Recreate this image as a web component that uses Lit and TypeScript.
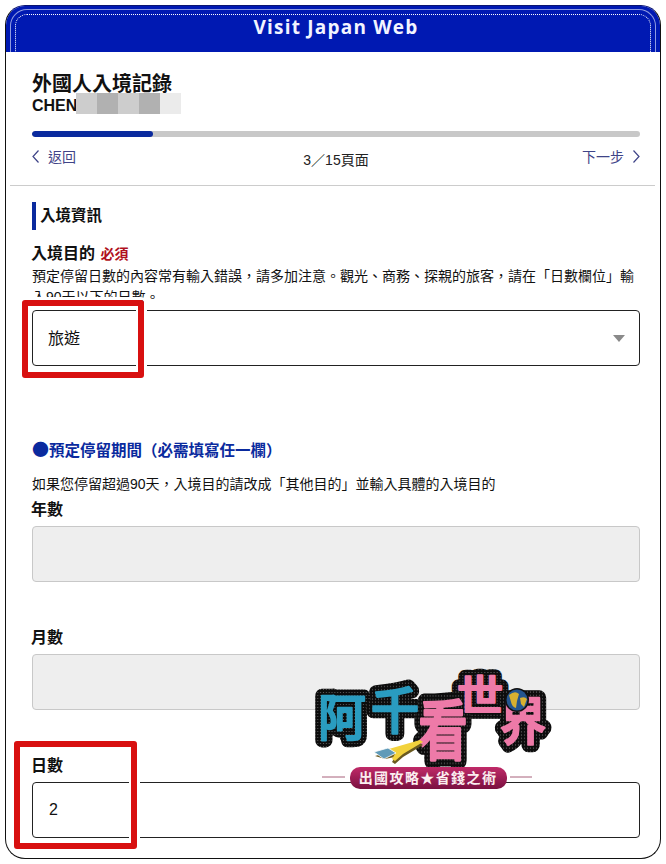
import { LitElement, html, css, svg } from "lit";
import { customElement } from "lit/decorators.js";

const GLYPHS = [
  { t: "阿", x: 30, y: 72, s: 50, c: "#2a9cc0", sx: 0.95, sy: 1 },
  { t: "千", x: 83, y: 65, s: 48, c: "#2a9cc0", sx: 1, sy: 1.05 },
  { t: "世", x: 168, y: 47, s: 44, c: "#ee7aa8", sx: 1.05, sy: 0.95 },
  { t: "界", x: 211, y: 76, s: 46, c: "#ee7aa8", sx: 1, sy: 1.1 },
  { t: "看", x: 131, y: 90, s: 52, c: "#ee7aa8", sx: 0.95, sy: 1.25 },
];

@customElement("app-root")
export class AppRoot extends LitElement {
  static styles = css`
    :host {
      display: block;
      position: relative;
      width: 666px;
      height: 864px;
      overflow: hidden;
      background: #fff;
      color: #111;
      font-family: "Liberation Sans", "Noto Sans CJK TC", sans-serif;
      font-size: 14px;
    }
    .page { padding: 5px 5px 0 5px; }
    .frame {
      box-sizing: border-box;
      width: 656px;
      height: 854px;
      border: 1px solid #111;
      border-top-color: #0a1470;
      border-radius: 20px;
      overflow: hidden;
      background: #fff;
    }
    .header {
      position: relative;
      height: 46px;
      background: #0019b2;
      display: flex;
      align-items: center;
      justify-content: center;
      overflow: hidden;
    }
    .brand {
      font-family: "Open Sans", sans-serif;
      font-weight: 700;
      font-size: 19px;
      letter-spacing: 1.2px;
      color: #f2f4ff;
      margin: -5px 0 0 6px;
    }
    .line, .dots {
      position: absolute;
      border-bottom: none !important;
      box-sizing: border-box;
    }
    .line {
      inset: 3px 4px -30px 4px;
      border: 1px solid #8f9be0;
      border-radius: 17px 17px 0 0;
    }
    .dots {
      inset: 8px 9px -30px 9px;
      border: 1px dotted #fff;
      border-radius: 12px 12px 0 0;
    }
    .top { padding: 22px 20px 0 26px; }
    .title { font-size: 20px; font-weight: 700; line-height: 20px; margin-bottom: -1px; }
    .name {
      display: flex;
      font-size: 16px;
      font-weight: 700;
      line-height: 21px;
      height: 21px;
    }
    .chen { margin-top: 2px; }
    .blur { width: 21px; height: 21px; }
    .first-blur { margin-left: -1px; }
    .b1 { background: #cdcdcd; }
    .b2 { background: #b1b1b1; }
    .b3 { background: #ebebeb; }
    .track {
      margin-top: 17px;
      height: 6px;
      border-radius: 3px;
      background: #c8c8c8;
      overflow: hidden;
    }
    .fill { width: 19.9%; height: 100%; border-radius: 3px; background: #0a2a9e; }
    .nav {
      display: flex;
      justify-content: space-between;
      align-items: flex-start;
      padding-top: 10px;
      height: 38px;
      box-sizing: content-box;
      line-height: 20px;
    }
    .link { display: flex; align-items: center; gap: 9px; color: #3f4488; }
    .link svg { display: block; margin-top: -2px; }
    .count { margin-top: 3px; color: #222; padding-left: 14px; }
    .rule { height: 1px; margin: 0 5px 0 4px; background: #ccc; }
    .body { padding: 16px 20px 0 26px; }
    .section {
      border-left: 4px solid #0a2a9e;
      padding-left: 4px;
      font-weight: 700;
      line-height: 28px;
      height: 28px;
      font-size: 15.5px;
    }
    .label { font-size: 16px; font-weight: 700; line-height: 22px; margin-left: -1px; }
    .first { margin-top: 13px; margin-bottom: -1px; }
    .req { font-size: 14px; color: #b01020; margin-left: 1px; }
    .desc { line-height: 21px; margin-top: 2px; height: 44px; }
    .field {
      box-sizing: border-box;
      height: 56px;
      border: 1px solid #222;
      border-radius: 4px;
      background: #fff;
      display: flex;
      align-items: center;
      justify-content: space-between;
      padding: 0 14px 0 16px;
      font-size: 16px;
    }
    .sel-text { margin: -2px 0 0 -1px; }
    .arrow {
      width: 0;
      height: 0;
      border-left: 6px solid transparent;
      border-right: 6px solid transparent;
      border-top: 7px solid #8a8a8a;
    }
    .off { background: #eeeeee; border-color: #c8c8c8; }
    .h2 {
      margin-top: 73px;
      font-size: 15.5px;
      font-weight: 700;
      line-height: 24px;
      height: 24px;
      color: #0a2a9e;
      white-space: nowrap;
    }
    .bullet { font-family: "Noto Sans CJK TC", sans-serif; font-size: 17px; line-height: 20px; }
    .note { margin-top: 11px; line-height: 20px; }
    .gap4 { margin-top: 5px; }
    .gap44 { margin-top: 45px; }
    .lab2 { margin-bottom: 5px; }
    .mark {
      position: absolute;
      box-sizing: border-box;
      border: 6px solid #d81010;
      border-radius: 3px;
      box-shadow: 0 0 0 3px #fff, inset 0 0 0 2px #fff;
    }
    .m1 { left: 22px; top: 300px; width: 122px; height: 78px; }
    .m2 { left: 14px; top: 741px; width: 123px; height: 108px; }
    .logo { position: absolute; left: 312px; top: 664px; width: 240px; height: 130px; overflow: visible; }
    .g {
      font-family: "Noto Sans CJK TC", sans-serif;
      font-weight: 500;
      text-anchor: middle;
    }
    .g-out { stroke: url(#dotty); stroke-width: 14px; stroke-linejoin: round; fill: #111; }
    .g-in { stroke-width: 2.2px; stroke-linejoin: round; }
    .pill-text {
      font-family: "Noto Sans CJK TC", sans-serif;
      font-weight: 700;
      font-size: 14px;
      letter-spacing: 1.4px;
      fill: #fbeef0;
      text-anchor: middle;
    }
  `;

  private logo() {
    const tf = (g: (typeof GLYPHS)[number]) => `translate(${g.x} ${g.y}) scale(${g.sx} ${g.sy})`;
    return html`<svg class="logo" viewBox="0 0 240 130" aria-label="logo">
      <defs>
        <pattern id="dotty" width="3" height="3" patternUnits="userSpaceOnUse">
          <rect width="3" height="3" fill="#0c0c0c"></rect>
          <circle cx="1.5" cy="1.5" r=".6" fill="#6a6a6a"></circle>
        </pattern>
        <linearGradient id="pill" x1="0" y1="0" x2="0" y2="1">
          <stop offset="0" stop-color="#c02a68"></stop>
          <stop offset="1" stop-color="#7a1040"></stop>
        </linearGradient>
      </defs>
      ${GLYPHS.map(
        (g) => svg`<text class="g g-out" transform=${tf(g)} font-size=${g.s}>${g.t}</text>`
      )}
      ${GLYPHS.map(
        (g) =>
          svg`<text class="g g-in" transform=${tf(g)} font-size=${g.s} fill=${g.c} stroke=${g.c}>${g.t}</text>`
      )}
      <circle cx="205" cy="36" r="12" fill="#111"></circle>
      <circle cx="205" cy="36" r="10.5" fill="#24558f"></circle>
      <path d="M197 31q6-5 10-1l-2 7 -1 7q-4-1-5-6zM208 34q5-2 7 1l-3 8-3-3z" fill="#d8b030"></path>
      <path d="M63 92l45-13 3 2-20 12-8 7-3-2 3-5-10 2z" fill="#6a5a20"></path>
      <path d="M63 89l45-13 3 2-20 12-8 7-3-2 3-5-10 2z" fill="#f2d23c"></path>
      <path d="M62 88l14-4 8 5-12 6z" fill="#5f9ab8" stroke="#fff" stroke-width=".8"></path>
      <path d="M10 113h23M198 113h22" stroke="#a8607a" stroke-width="1"></path>
      <rect x="38" y="103" width="157" height="22" rx="10" fill="url(#pill)"></rect>
      <text class="pill-text" x="116" y="119">出國攻略★省錢之術</text>
    </svg>`;
  }

  render() {
    return html`
      <div class="page">
        <div class="frame">
          <div class="header">
            <span class="line"></span>
            <span class="dots"></span>
            <span class="brand">Visit Japan Web</span>
          </div>
          <div class="top">
            <div class="title">外國人入境記錄</div>
            <div class="name">
              <span class="chen">CHEN</span>
              <span class="blur b1 first-blur"></span><span class="blur b2"></span
              ><span class="blur b1"></span><span class="blur b2"></span
              ><span class="blur b3"></span>
            </div>
            <div class="track"><div class="fill"></div></div>
            <div class="nav">
              <span class="link">
                <svg width="7" height="13" viewBox="0 0 7 13" fill="none" stroke="#3f4488" stroke-width="1.2">
                  <path d="M6.5 .5L1 6.5l5.5 6"></path>
                </svg>
                返回
              </span>
              <span class="count">3／15頁面</span>
              <span class="link">
                下一步
                <svg width="7" height="13" viewBox="0 0 7 13" fill="none" stroke="#3f4488" stroke-width="1.2">
                  <path d="M.5 .5L6 6.5l-5.5 6"></path>
                </svg>
              </span>
            </div>
          </div>
          <div class="rule"></div>
          <div class="body">
            <div class="section">入境資訊</div>
            <div class="label first">入境目的 <span class="req">必須</span></div>
            <div class="desc">
              預定停留日數的內容常有輸入錯誤，請多加注意。觀光、商務、探親的旅客，請在「日數欄位」輸入90天以下的日數。
            </div>
            <div class="field"><span class="sel-text">旅遊</span><span class="arrow"></span></div>
            <div class="h2"><span class="bullet">●</span>預定停留期間（必需填寫任一欄）</div>
            <div class="note">如果您停留超過90天，入境目的請改成「其他目的」並輸入具體的入境目的</div>
            <div class="label gap4 lab2">年數</div>
            <div class="field off"></div>
            <div class="label gap44 lab2">月數</div>
            <div class="field off"></div>
            <div class="label gap44 lab2">日數</div>
            <div class="field">2</div>
          </div>
        </div>
      </div>
      <div class="mark m1"></div>
      <div class="mark m2"></div>
      ${this.logo()}
    `;
  }
}
